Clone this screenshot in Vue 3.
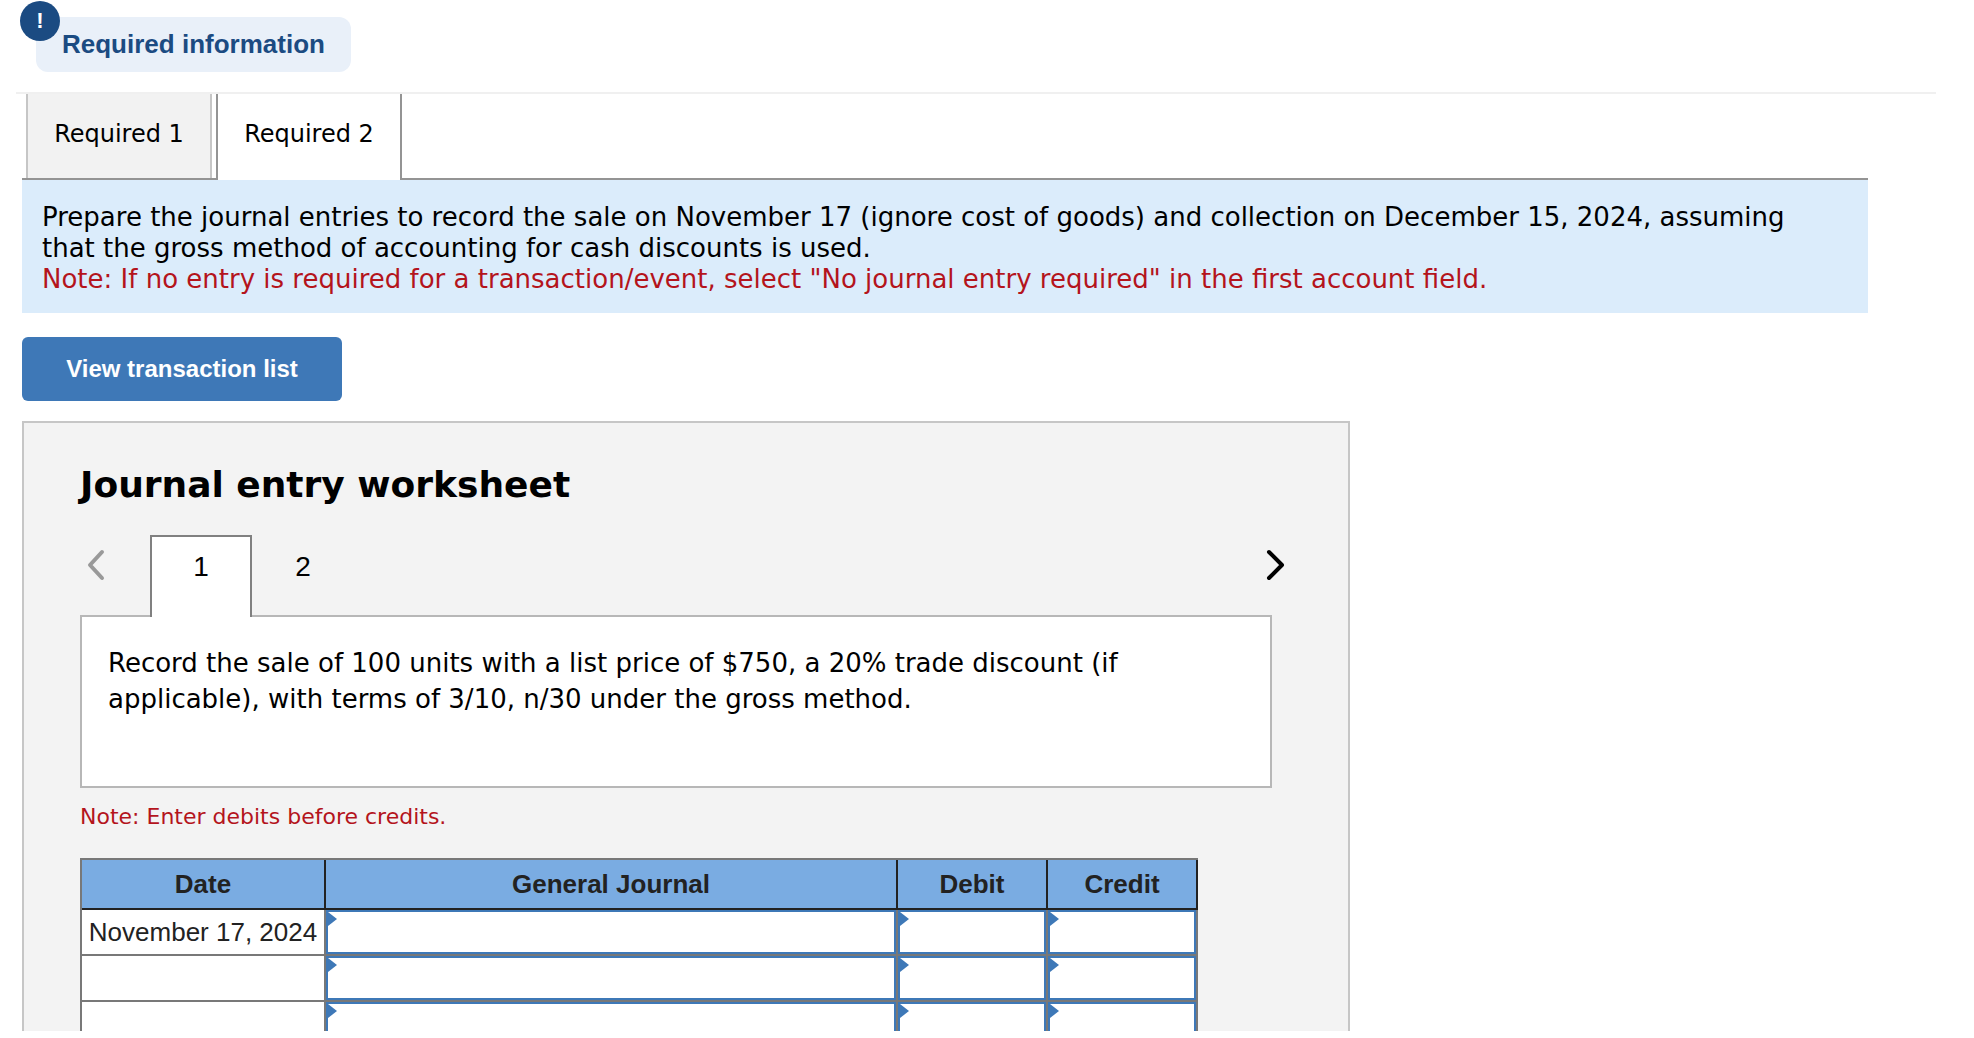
<script setup>
import { ref, reactive } from 'vue'

const activePart = ref(2)
const activeEntry = ref(1)

const rows = reactive([
  { date: 'November 17, 2024', account: '', debit: '', credit: '' },
  { date: '', account: '', debit: '', credit: '' },
  { date: '', account: '', debit: '', credit: '' },
])
const fields = [
  { key: 'account', label: 'General Journal' },
  { key: 'debit', label: 'Debit' },
  { key: 'credit', label: 'Credit' },
]
</script>

<template>
  <main class="page">
    <header class="info">
      <div class="pill">
        <span class="badge">!</span>
        Required information
      </div>
    </header>

    <section class="content">
      <nav class="tabs">
        <button
          v-for="n in 2"
          :key="n"
          type="button"
          class="tab"
          :class="{ active: activePart === n }"
          @click="activePart = n"
        >Required {{ n }}</button>
      </nav>

      <div class="prompt">
        <p>Prepare the journal entries to record the sale on November 17 (ignore cost of goods) and collection on December 15, 2024, assuming that the gross method of accounting for cash discounts is used.</p>
        <p class="red">Note: If no entry is required for a transaction/event, select "No journal entry required" in the first account field.</p>
      </div>

      <button type="button" class="view">View transaction list</button>

      <section class="sheet">
        <h1>Journal entry worksheet</h1>

        <div class="pager">
          <button type="button" class="arrow prev" aria-label="Previous entry" disabled>
            <svg width="20" height="32" viewBox="0 0 20 32"><path d="M16 3 4 16l12 13" /></svg>
          </button>
          <button
            v-for="n in 2"
            :key="n"
            type="button"
            class="entry"
            :class="{ active: activeEntry === n }"
            @click="activeEntry = n"
          >{{ n }}</button>
          <button type="button" class="arrow next" aria-label="Next entry">
            <svg width="20" height="32" viewBox="0 0 20 32"><path d="M3 3 16 16 3 29" /></svg>
          </button>
        </div>

        <div class="task">Record the sale of 100 units with a list price of $750, a 20% trade discount (if applicable), with terms of 3/10, n/30 under the gross method.</div>

        <p class="hint red">Note: Enter debits before credits.</p>

        <table>
          <colgroup>
            <col class="c-date" /><col /><col class="c-num" /><col class="c-num" />
          </colgroup>
          <thead>
            <tr>
              <th scope="col">Date</th>
              <th v-for="f in fields" :key="f.key" scope="col">{{ f.label }}</th>
            </tr>
          </thead>
          <tbody>
            <tr v-for="(row, i) in rows" :key="i">
              <td class="date">{{ row.date }}</td>
              <td v-for="f in fields" :key="f.key" class="cell">
                <input v-model="row[f.key]" type="text" :aria-label="`${f.label}, line ${i + 1}`" />
              </td>
            </tr>
          </tbody>
        </table>
      </section>
    </section>
  </main>
</template>

<style>
body {
  background: #fff;
}
</style>

<style scoped>
* {
  box-sizing: border-box;
}
.page {
  height: calc(100vh - 7px);
  overflow: hidden;
  padding: 0 38px 0 16px;
  font-family: Verdana, "DejaVu Sans", sans-serif;
  color: #000;
}
button {
  font-family: inherit;
  color: inherit;
  cursor: pointer;
}
p,
h1 {
  margin: 0;
}
.red {
  color: #b4141c;
}
.info {
  display: flex;
  padding: 17px 20px 20px;
  border-bottom: 2px solid #f0f0f0;
}
.pill {
  position: relative;
  padding: 0 26px;
  border-radius: 12px;
  background: #e9f0f9;
  color: #1b4b82;
  font: bold 26px/55px Arial, "Liberation Sans", sans-serif;
}
.badge {
  position: absolute;
  left: -16px;
  top: -16px;
  width: 40px;
  height: 40px;
  border-radius: 50%;
  background: #1b4b82;
  color: #fff;
  font-size: 22px;
  line-height: 40px;
  text-align: center;
}
.content {
  margin: 0 68px 0 6px;
}
.tabs {
  display: flex;
  gap: 4px;
  height: 86px;
  padding-left: 4px;
  border-bottom: 2px solid #949494;
}
.tab {
  width: 186px;
  height: 84px;
  padding: 0 0 4px;
  border: solid #c6c6c6;
  border-width: 0 2px;
  background: #f2f2f2;
  font-size: 24px;
}
.tab.active {
  height: 86px;
  padding-bottom: 6px;
  border-color: #949494;
  background: #fff;
}
.prompt {
  padding: 22px 60px 18px 20px;
  background: #dbecfb;
  font-size: 26px;
  line-height: 31px;
}
.view {
  display: block;
  width: 320px;
  height: 64px;
  margin: 24px 0 20px;
  padding: 0;
  border: 0;
  border-radius: 6px;
  background: #3e78b7;
  color: #fff;
  font: bold 24px/64px Arial, "Liberation Sans", sans-serif;
}
.sheet {
  max-width: 1328px;
  padding: 40px 76px 40px 56px;
  border: 2px solid #c6c6c6;
  background: #f3f3f3;
}
h1 {
  font-size: 36px;
  line-height: 44px;
}
.pager {
  display: flex;
  height: 82px;
  margin: 28px -20px -2px 0;
  position: relative;
}
.entry {
  width: 102px;
  padding: 0 0 20px;
  border: 2px solid transparent;
  border-bottom: 0;
  background: none;
  font: 28px/32px Arial, "Liberation Sans", sans-serif;
}
.entry.active {
  border-color: #808080;
  background: #fff;
}
.arrow {
  height: 60px;
  padding: 0;
  border: 0;
  background: none;
}
.arrow svg {
  display: block;
  fill: none;
  stroke: #000;
  stroke-width: 4;
  stroke-linecap: round;
  stroke-linejoin: round;
}
.prev {
  width: 70px;
  padding-left: 6px;
}
.prev svg {
  stroke: #999;
}
.next {
  margin-left: auto;
  padding-right: 6px;
}
.task {
  min-height: 173px;
  padding: 28px 100px 24px 26px;
  border: 2px solid #b7b7b7;
  background: #fff;
  font-size: 26px;
  line-height: 36px;
}
.hint {
  margin: 14px 0 26px;
  font-size: 22px;
  line-height: 30px;
}
table {
  width: 1118px;
  max-width: 100%;
  table-layout: fixed;
  border-spacing: 0;
  border: solid #787878;
  border-width: 2px 0 0 2px;
  background: #fff;
  color: #222;
  font: 26px/44px Arial, "Liberation Sans", sans-serif;
}
.c-date {
  width: 244px;
}
.c-num {
  width: 150px;
}
th {
  height: 50px;
  padding: 0;
  border: solid #222;
  border-width: 0 2px 2px 0;
  background: #7aace2;
}
td {
  height: 46px;
  padding: 0;
  border: solid #787878;
  border-width: 0 2px 2px 0;
}
.date {
  text-align: center;
  white-space: nowrap;
}
.cell {
  position: relative;
}
.cell::before {
  content: "";
  position: absolute;
  left: 2px;
  top: 2px;
  width: 9px;
  height: 14px;
  background: #3e78b7;
  clip-path: polygon(0 0, 100% 50%, 0 100%);
}
input {
  display: block;
  width: 100%;
  height: 44px;
  padding: 0 14px;
  border: 2px solid #3e78b7;
  border-radius: 0;
  background: #fff;
  font: inherit;
  outline: 0;
}
</style>
